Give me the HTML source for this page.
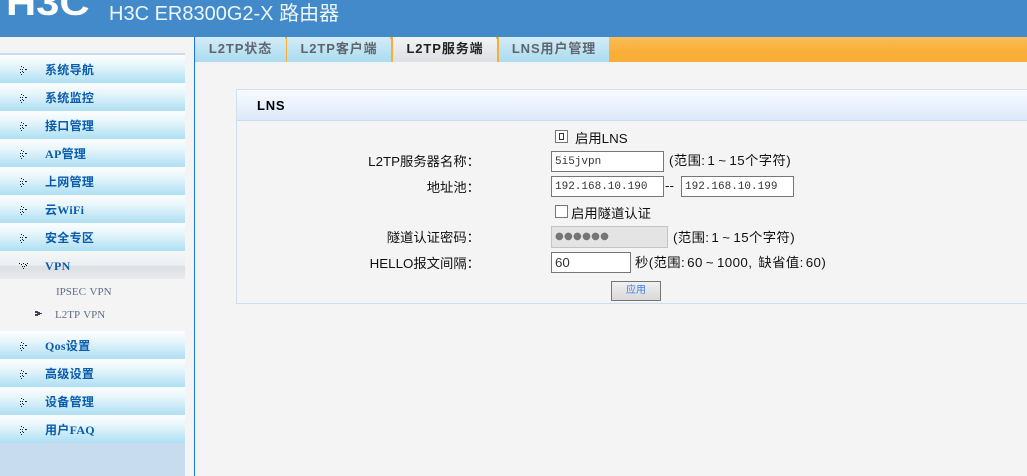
<!DOCTYPE html>
<html><head><meta charset="utf-8">
<style>
html,body{margin:0;padding:0;width:1027px;height:476px;overflow:hidden;background:#f4f4f4;font-family:"Liberation Sans","Noto Sans CJK SC",sans-serif;}
div,input,svg{position:absolute;box-sizing:border-box;}
#bg{left:0;top:0;width:1027px;height:476px;background:#f4f4f4;}
#hd{left:0;top:0;width:1027px;height:37px;background:#428aca;overflow:hidden;}
#logo{left:6px;top:-15px;color:#fff;font:bold 36px/36px "Liberation Sans",sans-serif;transform-origin:0 0;transform:scaleX(1.16);white-space:nowrap;}
#title{left:109px;top:2px;color:#eef5fb;font-size:20px;line-height:24px;white-space:nowrap;}
#side{left:0;top:53px;width:185px;height:423px;background:#c8dcf0;}
#line{left:194px;top:37px;width:1px;height:439px;background:#1a73e8;}
.it{left:0;width:185px;height:28px;background:linear-gradient(#fdfeff 0,#e8f6fb 35%,#addff3 100%);}
.it b{position:absolute;left:45px;top:8px;font:bold 12px/14px "Liberation Serif","WenQuanYi Zen Hei","Noto Sans CJK SC",serif;color:#0a5cae;white-space:nowrap;letter-spacing:.3px;}
.ar{left:20px;top:10px;width:8px;height:10px;}
.vpn{background:linear-gradient(#f4f6f8 0,#eceff2 50%,#dcdfe3 55%,#e8eaec 100%);}
.sub{left:55px;font:11px/14px "Liberation Serif",serif;color:#5d6d85;white-space:nowrap;word-spacing:1px;}
.tab{top:37px;height:25px;background:linear-gradient(#d3ecf6 0,#aadcf0 100%);font:bold 13px/24px "Liberation Sans","Noto Sans CJK SC",sans-serif;color:#5f656c;text-align:center;letter-spacing:.9px;white-space:nowrap;}
.sep{top:37px;height:25px;background:#f9ae3a;}
#pn{left:236px;top:89px;width:800px;height:215px;border:1px solid #d0dfee;background:#f4f4f4;}
#ph{left:0;top:0;width:800px;height:31px;border-bottom:1px solid #c8dcf0;background:linear-gradient(#f8fbff 0,#dce9fa 100%);font:bold 13px/31px "Liberation Sans",sans-serif;color:#000;padding-left:20px;letter-spacing:.8px;}
.t{font-size:13.33px;line-height:16px;color:#111;white-space:nowrap;}
.r{letter-spacing:.4px;}
.r i{font-style:normal;letter-spacing:3.4px;margin-left:3px;}
.r u{text-decoration:none;letter-spacing:2.4px;}
.l{right:547px;text-align:right;}
.in{background:#fff;border:1px solid #767676;font:11px/21px "Liberation Mono",monospace;color:#333;padding-left:3px;white-space:nowrap;}
.cb{background:#fff;border:1px solid #767676;width:13px;height:13px;}
</style></head><body>
<div id="bg"></div>
<div id="hd"><div id="logo">H3C</div><div id="title">H3C ER8300G2-X 路由器</div></div>
<div id="side">
<div class="it" style="top:2px"><svg class="ar" viewBox="0 0 8 10"><path d="M1 1h1v1H1zM3 2h1v1H3zM0 4h1v1H0zM2 4h1v1H2zM5 4h2v1H5zM0 7h1v1H0zM2 6h1v1H2zM1 9h1v1H1zM3 7h1v1H3z" fill="#223"/></svg><b>系统导航</b></div>
<div class="it" style="top:30px"><svg class="ar" viewBox="0 0 8 10"><path d="M1 1h1v1H1zM3 2h1v1H3zM0 4h1v1H0zM2 4h1v1H2zM5 4h2v1H5zM0 7h1v1H0zM2 6h1v1H2zM1 9h1v1H1zM3 7h1v1H3z" fill="#223"/></svg><b>系统监控</b></div>
<div class="it" style="top:58px"><svg class="ar" viewBox="0 0 8 10"><path d="M1 1h1v1H1zM3 2h1v1H3zM0 4h1v1H0zM2 4h1v1H2zM5 4h2v1H5zM0 7h1v1H0zM2 6h1v1H2zM1 9h1v1H1zM3 7h1v1H3z" fill="#223"/></svg><b>接口管理</b></div>
<div class="it" style="top:86px"><svg class="ar" viewBox="0 0 8 10"><path d="M1 1h1v1H1zM3 2h1v1H3zM0 4h1v1H0zM2 4h1v1H2zM5 4h2v1H5zM0 7h1v1H0zM2 6h1v1H2zM1 9h1v1H1zM3 7h1v1H3z" fill="#223"/></svg><b>AP管理</b></div>
<div class="it" style="top:114px"><svg class="ar" viewBox="0 0 8 10"><path d="M1 1h1v1H1zM3 2h1v1H3zM0 4h1v1H0zM2 4h1v1H2zM5 4h2v1H5zM0 7h1v1H0zM2 6h1v1H2zM1 9h1v1H1zM3 7h1v1H3z" fill="#223"/></svg><b>上网管理</b></div>
<div class="it" style="top:142px"><svg class="ar" viewBox="0 0 8 10"><path d="M1 1h1v1H1zM3 2h1v1H3zM0 4h1v1H0zM2 4h1v1H2zM5 4h2v1H5zM0 7h1v1H0zM2 6h1v1H2zM1 9h1v1H1zM3 7h1v1H3z" fill="#223"/></svg><b>云WiFi</b></div>
<div class="it" style="top:170px"><svg class="ar" viewBox="0 0 8 10"><path d="M1 1h1v1H1zM3 2h1v1H3zM0 4h1v1H0zM2 4h1v1H2zM5 4h2v1H5zM0 7h1v1H0zM2 6h1v1H2zM1 9h1v1H1zM3 7h1v1H3z" fill="#223"/></svg><b>安全专区</b></div>
<div class="it vpn" style="top:198px"><svg class="ar" viewBox="0 0 10 7" style="left:19px;top:12px;width:10px;height:7px"><path d="M0 0h1v1H0zM2 1h1v1H2zM4 0h1v1H4zM6 1h1v1H6zM8 0h1v1H8zM3 3h1v1H3zM5 3h1v1H5zM7 2h1v1H7zM4 5h1v1H4z" fill="#111"/></svg><b>VPN</b></div>
<div style="left:0;top:226px;width:185px;height:52px;background:#f4f4f4"></div>
<div class="sub" style="left:56px;top:232px">IPSEC VPN</div>
<svg style="left:35px;top:258px" width="7" height="6" viewBox="0 0 7 6"><path d="M0 0h3v1h2v1h2v1H5v1H3v1H0V3h2V2H0z" fill="#3a4560"/></svg>
<div class="sub" style="top:255px">L2TP VPN</div>
<div class="it" style="top:278px"><svg class="ar" viewBox="0 0 8 10"><path d="M1 1h1v1H1zM3 2h1v1H3zM0 4h1v1H0zM2 4h1v1H2zM5 4h2v1H5zM0 7h1v1H0zM2 6h1v1H2zM1 9h1v1H1zM3 7h1v1H3z" fill="#223"/></svg><b>Qos设置</b></div>
<div class="it" style="top:306px"><svg class="ar" viewBox="0 0 8 10"><path d="M1 1h1v1H1zM3 2h1v1H3zM0 4h1v1H0zM2 4h1v1H2zM5 4h2v1H5zM0 7h1v1H0zM2 6h1v1H2zM1 9h1v1H1zM3 7h1v1H3z" fill="#223"/></svg><b>高级设置</b></div>
<div class="it" style="top:334px"><svg class="ar" viewBox="0 0 8 10"><path d="M1 1h1v1H1zM3 2h1v1H3zM0 4h1v1H0zM2 4h1v1H2zM5 4h2v1H5zM0 7h1v1H0zM2 6h1v1H2zM1 9h1v1H1zM3 7h1v1H3z" fill="#223"/></svg><b>设备管理</b></div>
<div class="it" style="top:362px"><svg class="ar" viewBox="0 0 8 10"><path d="M1 1h1v1H1zM3 2h1v1H3zM0 4h1v1H0zM2 4h1v1H2zM5 4h2v1H5zM0 7h1v1H0zM2 6h1v1H2zM1 9h1v1H1zM3 7h1v1H3z" fill="#223"/></svg><b>用户FAQ</b></div>
</div>
<div id="line"></div>

<div style="left:609px;top:37px;width:418px;height:25px;background:linear-gradient(#fbbd58 0,#f9ae38 60%,#f9ae36 100%)"></div>
<div class="tab" style="left:195px;width:91px">L2TP状态</div>
<div class="sep" style="left:286px;width:1px"></div>
<div class="sep" style="left:285px;width:3px;height:2px"></div>
<div class="tab" style="left:287px;width:104px">L2TP客户端</div>
<div class="sep" style="left:391px;width:2px"></div>
<div class="sep" style="left:390px;width:4px;height:2px"></div>
<div class="tab" style="left:393px;width:104px;background:linear-gradient(#f2f3f4 0,#dcdfe3 100%);color:#222">L2TP服务端</div>
<div class="sep" style="left:497px;width:2px"></div>
<div class="sep" style="left:496px;width:4px;height:2px"></div>
<div class="tab" style="left:499px;width:110px">LNS用户管理</div>

<div id="pn"><div id="ph">LNS</div></div>

<div class="cb" style="left:555px;top:130px"></div>
<div style="left:559px;top:133px;width:5px;height:7px;border:1px solid #333"></div>
<div class="t" style="left:575px;top:131px">启用LNS</div>

<div class="t l" style="top:154px">L2TP服务器名称：</div>
<div class="in" style="left:551px;top:151px;width:113px;height:21px">5i5jvpn</div>
<div class="t r" style="left:669px;top:153px">(范围<u>:</u>1<i>~</i>15个字符)</div>

<div class="t l" style="top:180px">地址池：</div>
<div class="in" style="left:551px;top:176px;width:113px;height:21px">192.168.10.190</div>
<div class="t" style="left:665px;top:178px">--</div>
<div class="in" style="left:681px;top:176px;width:113px;height:21px">192.168.10.199</div>

<div class="cb" style="left:555px;top:205px"></div>
<div class="t" style="left:571px;top:206px">启用隧道认证</div>

<div class="t l" style="top:230px">隧道认证密码：</div>
<div style="left:551px;top:226px;width:117px;height:22px;background:#e4e4e4;border:1px solid #c4c4c4;color:#757575;font:10px/20px 'DejaVu Sans',sans-serif;padding-left:3px;letter-spacing:.3px;white-space:nowrap">●●●●●●</div>
<div class="t r" style="left:673px;top:230px">(范围<u>:</u>1<i>~</i>15个字符)</div>

<div class="t l" style="top:256px">HELLO报文间隔：</div>
<div class="in" style="left:551px;top:252px;width:80px;height:21px;font:13.33px/19px 'Liberation Sans',sans-serif">60</div>
<div class="t r" style="left:635px;top:255px">秒(范围<u>:</u>60<i>~</i>1000<u>,</u> 缺省值<u>:</u>60)</div>

<div style="left:611px;top:281px;width:50px;height:20px;border:1px solid #767676;background:linear-gradient(#f0f0f0,#d8d8d8);color:#3f7fe8;font-size:10px;line-height:18px;text-align:center">应用</div>
</body></html>
